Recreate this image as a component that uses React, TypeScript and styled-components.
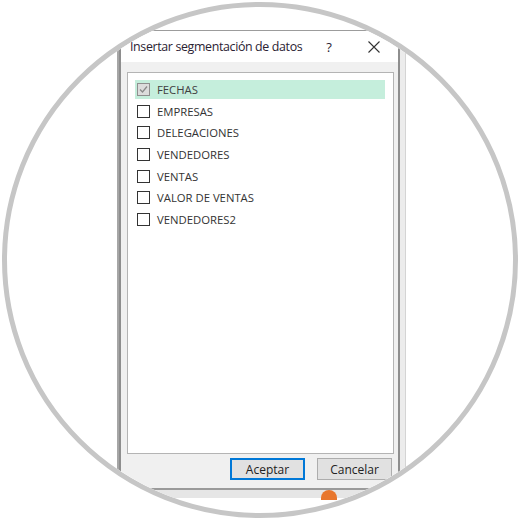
import { createGlobalStyle, styled } from 'styled-components';

const GlobalStyle = createGlobalStyle`
  html, body {
    margin: 0;
    padding: 0;
    background: #ffffff;
  }
  body {
    font-family: "Open Sans", "Noto Sans", "Liberation Sans", sans-serif;
  }
`

const Page = styled.div`
  width: 520px;
  height: 520px;
  padding: 2px;
  box-sizing: border-box;
  background: #ffffff;
`
const Lens = styled.div`
  width: 516px;
  height: 516px;
  box-sizing: border-box;
  border: 5px solid #c6c6c6;
  border-radius: 50%;
  overflow: hidden;
  background: #ffffff;
`
const Scene = styled.div`
  display: flex;
  flex-direction: column;
  padding: 23px 0 0 110px;
`
const Window = styled.div`
  display: flex;
`
const EdgeLine = styled.div`
  width: 2px;
  align-self: stretch;
  background: #a6a6a6;
`
const Dialog = styled.div`
  width: 281px;
  height: 458px;
  box-sizing: border-box;
  display: flex;
  flex-direction: column;
  border-left: 2px solid #8e8e8e;
  border-right: 2px solid #8e8e8e;
  border-top: 1px solid #9c9c9c;
  background: #f0f0f0;
`
const RightStrip = styled.div`
  width: 5px;
  align-self: stretch;
  background: #ececec;
  border-right: 1px solid #d4d4d4;
`
const TitleBar = styled.div`
  height: 32px;
  display: flex;
  align-items: center;
  background: #ffffff;
  padding-left: 9px;
  color: #2b2233;
`
const Title = styled.span`
  font-size: 12.4px;
  letter-spacing: -0.35px;
  flex: 1;
`
const Help = styled.span`
  width: 20px;
  font-size: 13px;
  text-align: center;
  margin-right: 29px;
`
const Close = styled.svg`
  width: 12px;
  height: 12px;
  margin-right: 18px;
`
const Body = styled.div`
  flex: 1;
  display: flex;
  flex-direction: column;
  padding: 10px 4px 8px 6px;
`
const ListBox = styled.div`
  height: 382px;
  box-sizing: border-box;
  border: 1px solid #b4b4b4;
  background: #ffffff;
  padding: 7px 8px 0 7px;
  display: flex;
  flex-direction: column;
  gap: 2.67px;
`
const Row = styled.div<{ $active?: boolean }>`
  height: 19px;
  display: flex;
  align-items: center;
  gap: 7px;
  padding-left: 2px;
  background: ${p => (p.$active ? '#c5eedc' : 'transparent')};
  font-size: 11.3px;
  color: ${p => (p.$active ? '#404040' : '#333333')};
`
const Box = styled.span<{ $checked?: boolean }>`
  width: 13px;
  height: 13px;
  box-sizing: border-box;
  border: 1px solid ${p => (p.$checked ? '#8f8f8f' : '#333333')};
  background: ${p => (p.$checked ? '#dcdcdc' : '#ffffff')};
  display: flex;
  align-items: center;
  justify-content: center;
`
const Buttons = styled.div`
  display: flex;
  justify-content: flex-end;
  gap: 12px;
  margin-top: 4px;
  padding-right: 2px;
`
const Button = styled.button<{ $primary?: boolean }>`
  width: 75px;
  height: 22px;
  box-sizing: border-box;
  background: #e1e1e1;
  border: ${p => (p.$primary ? '2px solid #0078d7' : '1px solid #adadad')};
  font-family: inherit;
  font-size: 12px;
  color: #222;
  padding: 0;
`
const BottomStrip = styled.div`
  width: 290px;
  height: 10px;
  background: #e6e6e6;
  border-top: 2px solid #9a9a9a;
  display: flex;
  justify-content: flex-end;
  padding-right: 70px;
  box-sizing: border-box;
`
const Blob = styled.span`
  width: 16px;
  height: 10px;
  border-radius: 8px 8px 0 0;
  background: #e8772e;
`

const fields = ['FECHAS', 'EMPRESAS', 'DELEGACIONES', 'VENDEDORES', 'VENTAS', 'VALOR DE VENTAS', 'VENDEDORES2']

export default function App() {
  return (
    <Page>
      <GlobalStyle />
      <Lens>
        <Scene>
          <Window>
            <EdgeLine />
            <Dialog>
              <TitleBar>
                <Title>Insertar segmentación de datos</Title>
                <Help>?</Help>
                <Close viewBox="0 0 12 12">
                  <path d="M0.5 0.5 L11.5 11.5 M11.5 0.5 L0.5 11.5" stroke="#333" strokeWidth="1.1" />
                </Close>
              </TitleBar>
              <Body>
                <ListBox>
                  {fields.map((f, i) => (
                    <Row key={f} $active={i === 0}>
                      <Box $checked={i === 0}>
                        {i === 0 && (
                          <svg width="11" height="11" viewBox="0 0 11 11">
                            <path d="M2 5.5 L4.5 8 L9 2.5" fill="none" stroke="#8a8a8a" strokeWidth="1.3" />
                          </svg>
                        )}
                      </Box>
                      {f}
                    </Row>
                  ))}
                </ListBox>
                <Buttons>
                  <Button $primary>Aceptar</Button>
                  <Button>Cancelar</Button>
                </Buttons>
              </Body>
            </Dialog>
            <RightStrip />
          </Window>
          <BottomStrip>
            <Blob />
          </BottomStrip>
        </Scene>
      </Lens>
    </Page>
  )
}
